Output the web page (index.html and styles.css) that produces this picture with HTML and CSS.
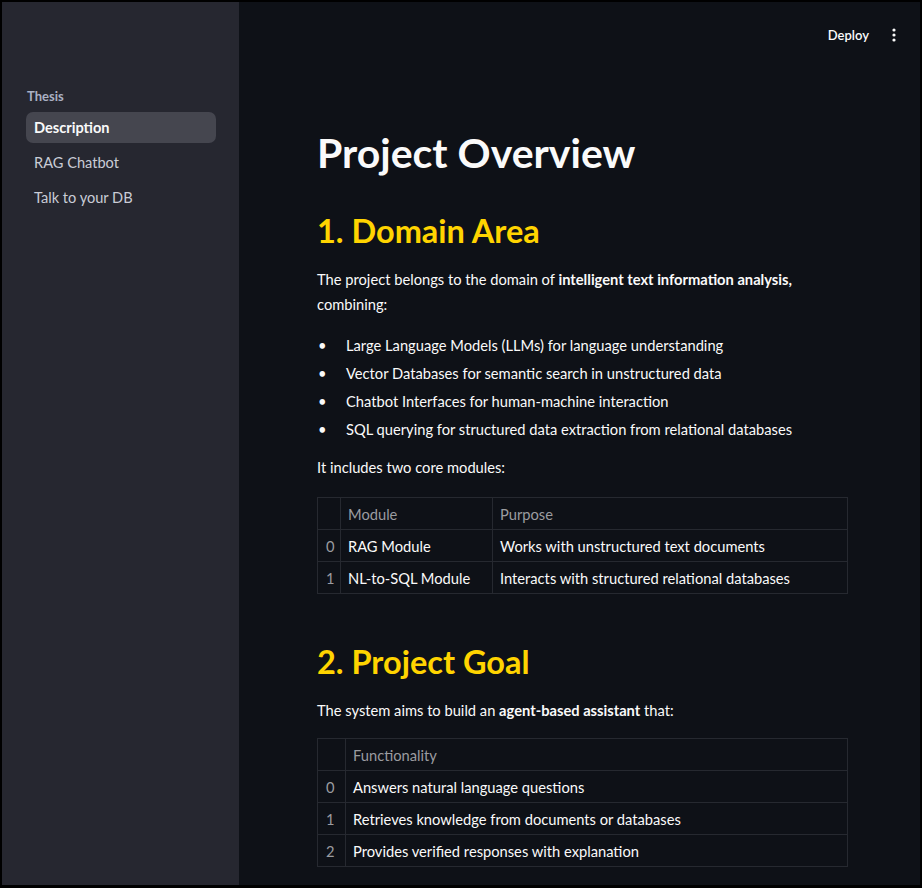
FILE: index.html
```html
<!DOCTYPE html>
<html lang="en">
<head>
<meta charset="utf-8">
<title>Project Overview</title>
<link rel="stylesheet" href="styles.css">
</head>
<body>
<div class="app">
  <aside class="sidebar">
    <div class="nav-title">Thesis</div>
    <nav class="nav">
      <a class="nav-item active">Description</a>
      <a class="nav-item">RAG Chatbot</a>
      <a class="nav-item">Talk to your DB</a>
    </nav>
  </aside>
  <main class="main">
    <header class="topbar">
      <span class="deploy">Deploy</span>
      <span class="menu">
        <svg width="4" height="14" viewBox="0 0 4 14"><circle cx="2" cy="2" r="1.6" fill="#fafafa"/><circle cx="2" cy="7" r="1.6" fill="#fafafa"/><circle cx="2" cy="12" r="1.6" fill="#fafafa"/></svg>
      </span>
    </header>
    <div class="content">
      <h1 class="h1">Project Overview</h1>
      <h2 class="h2 first">1. Domain Area</h2>
      <p class="p p1">The project belongs to the domain of <b>intelligent text information analysis,</b> combining:</p>
      <ul class="list">
        <li>Large Language Models (LLMs) for language understanding</li>
        <li>Vector Databases for semantic search in unstructured data</li>
        <li>Chatbot Interfaces for human-machine interaction</li>
        <li>SQL querying for structured data extraction from relational databases</li>
      </ul>
      <p class="p p2">It includes two core modules:</p>
      <table class="tbl t1">
        <colgroup><col class="c-idx1"><col class="c-mod"><col></colgroup>
        <thead><tr><th></th><th>Module</th><th>Purpose</th></tr></thead>
        <tbody>
          <tr><td class="idx">0</td><td>RAG Module</td><td>Works with unstructured text documents</td></tr>
          <tr><td class="idx">1</td><td>NL-to-SQL Module</td><td>Interacts with structured relational databases</td></tr>
        </tbody>
      </table>
      <h2 class="h2 second">2. Project Goal</h2>
      <p class="p p3">The system aims to build an <b>agent-based assistant</b> that:</p>
      <table class="tbl t2">
        <colgroup><col class="c-idx2"><col></colgroup>
        <thead><tr><th></th><th>Functionality</th></tr></thead>
        <tbody>
          <tr><td class="idx">0</td><td>Answers natural language questions</td></tr>
          <tr><td class="idx">1</td><td>Retrieves knowledge from documents or databases</td></tr>
          <tr><td class="idx">2</td><td>Provides verified responses with explanation</td></tr>
        </tbody>
      </table>
    </div>
  </main>
</div>
</body>
</html>
```
FILE: styles.css
```css
* { box-sizing: border-box; }
html, body { margin: 0; padding: 0; }
body {
  background: #000;
  width: 922px;
  height: 888px;
  overflow: hidden;
  font-family: "Lato", "Liberation Sans", sans-serif;
  color: #fafafa;
}
.app {
  display: flex;
  margin: 2px 2px 3px 2px;
  height: 883px;
}
.sidebar {
  width: 237px;
  flex: none;
  background: #262730;
  padding: 85px 23px 0 24px;
}
.nav-title {
  font-size: 13px;
  font-weight: 700;
  color: #aab1c4;
  line-height: 18px;
  padding-left: 1px;
}
.nav {
  display: flex;
  flex-direction: column;
  margin-top: 7px;
}
.nav-item {
  display: block;
  height: 31px;
  line-height: 31px;
  padding-left: 8px;
  font-size: 14.6px;
  color: #c9ccd6;
  border-radius: 7px;
  margin-bottom: 4px;
}
.nav-item.active {
  background: #45464f;
  color: #fafafa;
  font-weight: 700;
}
.main {
  flex: 1;
  background: #0e1117;
  display: flex;
  flex-direction: column;
}
.topbar {
  height: 66px;
  display: flex;
  align-items: center;
  justify-content: flex-end;
  padding-right: 24px;
  gap: 23px;
}
.deploy {
  font-size: 13px;
  font-weight: 600;
  color: #fafafa;
}
.menu { display: flex; align-items: center; }
.content {
  padding: 60px 0 0 78px;
  width: 609px;
}
.h1 {
  margin: 0;
  font-size: 41px;
  line-height: 50px;
  font-weight: 700;
  color: #fafafa;
}
.h2 {
  margin: 0;
  font-size: 32.5px;
  line-height: 44px;
  font-weight: 700;
  color: #ffd400;
}
.h2.first { margin-top: 31px; }
.h2.second { margin-top: 46px; }
.p {
  margin: 14px 0 0;
  font-size: 14.7px;
  line-height: 25px;
}
.p b { font-weight: 700; }
.p2 { margin-top: 12px; }
.list {
  margin: 14px 0 0;
  padding: 0;
  list-style: none;
  font-size: 14.7px;
  line-height: 28px;
}
.list li { display: flex; }
.list li::before {
  content: "\2022";
  width: 28px;
  flex: none;
  padding-left: 1px;
}
.tbl {
  border-collapse: collapse;
  width: 531px;
  font-size: 14.7px;
  table-layout: fixed;
}
.t1 { margin-top: 17px; }
.t2 { margin-top: 15px; }
.tbl th, .tbl td {
  border: 1px solid #262930;
  height: 32px;
  padding: 0 7px;
  text-align: left;
  white-space: nowrap;
}
.tbl th {
  font-weight: 400;
  color: #9b9ca0;
}
.tbl td.idx { color: #9b9ca0; padding: 0 0 0 8px; }
.c-idx1 { width: 23px; }
.c-mod { width: 152px; }
.c-idx2 { width: 28px; }
```
